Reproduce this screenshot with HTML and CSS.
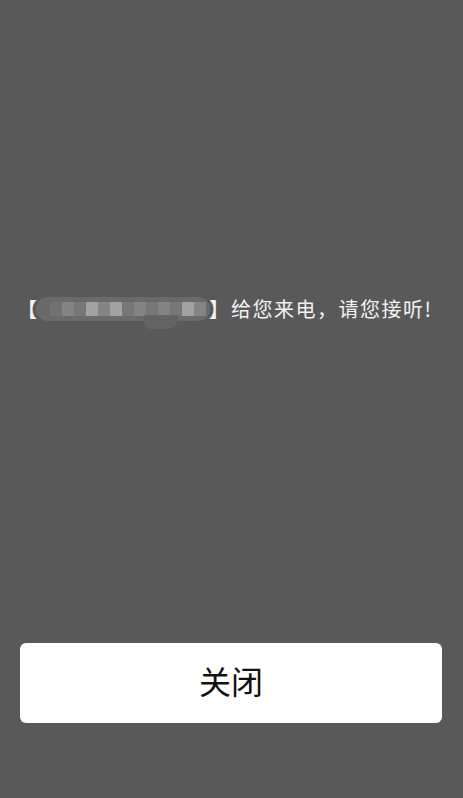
FILE: index.html
```html
<!DOCTYPE html>
<html lang="zh">
<head>
<meta charset="utf-8">
<title>来电</title>
<link rel="stylesheet" href="styles.css">
</head>
<body>
<div class="screen">
  <div class="message">
    <span class="bracket left">【</span>
    <span class="mosaic">
      <span class="cell c1"></span><span class="cell c2"></span><span class="cell c3"></span><span class="cell c4"></span><span class="cell c5"></span><span class="cell c3"></span><span class="cell c5"></span><span class="cell c4"></span><span class="cell c3"></span><span class="cell c4"></span><span class="cell c3"></span><span class="cell c4"></span><span class="cell c5"></span><span class="cell c3"></span>
      <span class="bump"></span>
    </span>
    <span class="bracket right">】</span>
    <span class="text">给您来电，请您接听!</span>
  </div>
  <div class="spacer"></div>
  <button class="close-btn">关闭</button>
</div>
</body>
</html>
```
FILE: styles.css
```css
html, body {
  margin: 0;
  padding: 0;
  background: #595959;
  height: 100%;
}
body {
  font-family: "Noto Sans CJK SC", "Noto Sans", sans-serif;
}
.screen {
  height: 798px;
  display: flex;
  flex-direction: column;
  box-sizing: border-box;
  padding: 296px 0 75px;
}
.message {
  display: flex;
  align-items: center;
  height: 26px;
  color: #f2f2f2;
  font-size: 20px;
  padding-left: 17px;
}
.bracket {
  display: inline-block;
  width: 20px;
  line-height: 26px;
  font-weight: 700;
}
.bracket.left { margin-right: 1px; }
.bracket.right { margin-left: -1px; margin-right: 2px; }
.text {
  letter-spacing: 1.5px;
  line-height: 26px;
}
.mosaic {
  position: relative;
  display: flex;
  align-items: center;
  width: 174px;
  height: 24px;
  margin-left: -2px;
  background: #6a6a6a;
  border-radius: 12px;
  padding-left: 2px;
  box-sizing: border-box;
}
.cell {
  display: block;
  width: 12px;
  height: 14px;
  flex: none;
}
.c1 { background: #696969; }
.c2 { background: #727272; }
.c3 { background: #848484; }
.c4 { background: #777777; }
.c5 { background: #a2a2a2; }
.mosaic .cell:first-child { border-radius: 7px 0 0 7px; }
.bump {
  position: absolute;
  left: 108px;
  top: 18px;
  width: 34px;
  height: 14px;
  background: #636363;
  border-radius: 0 0 10px 6px;
}
.spacer { flex: 1; }
.close-btn {
  margin: 0 21px 0 20px;
  height: 80px;
  background: #ffffff;
  border: none;
  border-radius: 6px;
  font-family: "Noto Sans CJK SC", "Noto Sans", sans-serif;
  font-size: 32px;
  color: #111111;
  padding: 0 0 6px;
}
```
